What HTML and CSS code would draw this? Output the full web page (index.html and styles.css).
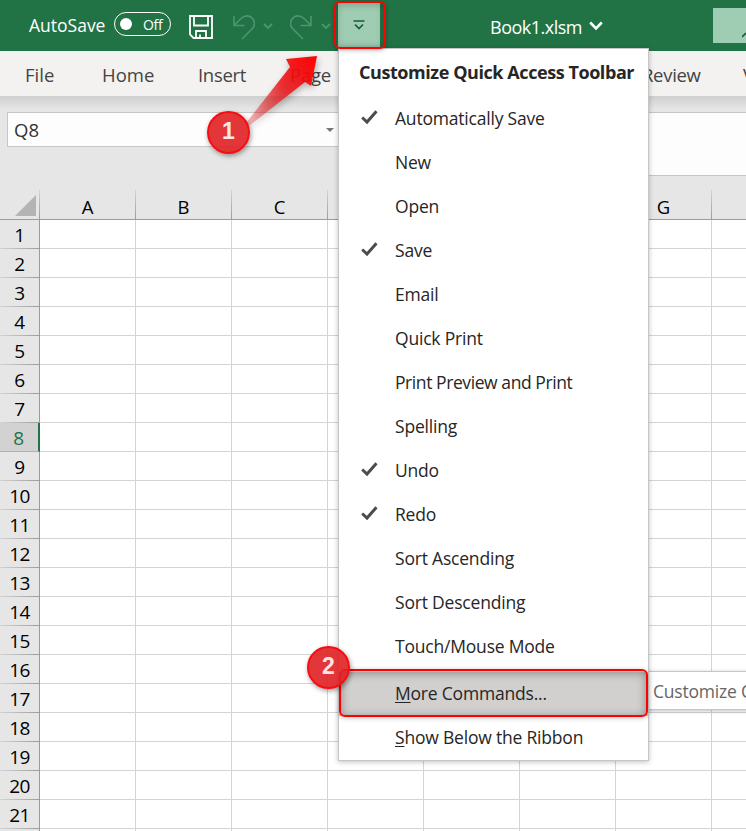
FILE: index.html
```html
<!doctype html>
<html lang="en">
  <head>
    <meta charset="UTF-8" />
    <meta name="viewport" content="width=device-width, initial-scale=1.0" />
    <title>Book1.xlsm</title>
    <link rel="stylesheet" href="styles.css">
  </head>
  <body>
    <header class="titlebar">
      <span class="autosave">AutoSave</span>
      <span class="toggle"><span class="knob"></span>Off</span>
      <svg class="save" width="24" height="24" viewBox="0 0 24 24" fill="none" stroke="#fff" stroke-width="1.8">
        <path d="M1 1H23V23H4.500L1 19.500Z" />
        <path d="M5 1V10.500H19V1M7 23V16H17V23M11 19.500V23" />
      </svg>
      <svg class="undo" width="22" height="25" viewBox="0 0 22 25" fill="none" stroke="#4e9470" stroke-width="1.6">
        <path d="M1 1V10.500H11.500M1.500 10L8 3.500C12 0 17 0 19.800 3.700C22.500 7.500 21.500 11.500 19 14L9 24" />
      </svg>
      <svg class="undo-arrow" width="10" height="6" viewBox="0 0 10 6" fill="none" stroke="#4e9470" stroke-width="1.8">
        <path d="M1 1L5 5L9 1" />
      </svg>
      <svg class="redo" width="22" height="25" viewBox="0 0 22 25" fill="none" stroke="#4e9470" stroke-width="1.6">
        <path d="M21 1V10.500H10.500M20.500 10L14 3.500C10 0 5 0 2.200 3.700C-.5 7.500 .5 11.500 3 14L13 24" />
      </svg>
      <svg class="redo-arrow" width="10" height="6" viewBox="0 0 10 6" fill="none" stroke="#4e9470" stroke-width="1.8">
        <path d="M1 1L5 5L9 1" />
      </svg>
      <span class="customize">
        <svg width="12" height="10" viewBox="0 0 12 10" fill="none" stroke="#185c37" stroke-width="1.700">
          <path d="M.5 1H11.500M2 4.500L6 8.500L10 4.500" />
        </svg>
      </span>
      <span class="filename">Book1.xlsm</span>
      <svg class="file-arrow" width="14" height="10" viewBox="0 0 14 10" fill="none" stroke="#fff" stroke-width="2.600">
        <path d="M1.200 1.500L7 7.300L12.800 1.500" />
      </svg>
      <span class="account">
        <svg width="4" height="6" viewBox="0 0 4 6"><path d="M0 5L4 1" stroke="#185c37" stroke-width="1.600" /></svg>
      </span>
    </header>

    <nav class="tabs">
      <a class="tab">File</a>
      <a class="tab tab-home">Home</a>
      <a class="tab tab-insert">Insert</a>
      <a class="tab tab-page">Page</a>
      <a class="tab tab-review">Review</a>
      <a class="tab tab-view">View</a>
    </nav>

    <section class="formula-bar">
      <div class="name-box">Q8<span class="name-arrow"></span></div>
      <div class="formula"></div>
    </section>

    <main class="sheet">
      <div class="columns">
        <div class="corner"><span class="triangle"></span></div>
        <div class="column">A</div>
        <div class="column">B</div>
        <div class="column">C</div>
        <div class="column">D</div>
        <div class="column">E</div>
        <div class="column">F</div>
        <div class="column">G</div>
      </div>
      <div class="grid">
        <div class="rows">
          <div class="row">1</div>
          <div class="row">2</div>
          <div class="row">3</div>
          <div class="row">4</div>
          <div class="row">5</div>
          <div class="row">6</div>
          <div class="row">7</div>
          <div class="row active">8</div>
          <div class="row">9</div>
          <div class="row">10</div>
          <div class="row">11</div>
          <div class="row">12</div>
          <div class="row">13</div>
          <div class="row">14</div>
          <div class="row">15</div>
          <div class="row">16</div>
          <div class="row">17</div>
          <div class="row">18</div>
          <div class="row">19</div>
          <div class="row">20</div>
          <div class="row">21</div>
        </div>
        <div class="cells"></div>
      </div>
    </main>

    <div class="tooltip">Customize Quick Access Toolbar</div>

    <div class="menu">
      <div class="menu-title">Customize Quick Access Toolbar</div>
      <div class="item checked">Automatically Save</div>
      <div class="item">New</div>
      <div class="item">Open</div>
      <div class="item checked">Save</div>
      <div class="item">Email</div>
      <div class="item">Quick Print</div>
      <div class="item item-long">Print Preview and Print</div>
      <div class="item">Spelling</div>
      <div class="item checked">Undo</div>
      <div class="item checked">Redo</div>
      <div class="item">Sort Ascending</div>
      <div class="item">Sort Descending</div>
      <div class="item">Touch/Mouse Mode</div>
      <div class="separator"></div>
      <div class="item hover"><span><u>M</u>ore Commands...</span></div>
      <div class="item"><span><u>S</u>how Below the Ribbon</span></div>
    </div>

    <div class="outline outline-button"></div>
    <div class="outline outline-item"></div>

    <svg class="arrow" width="90" height="90" viewBox="0 0 90 90">
      <defs>
        <linearGradient id="fade" x1="8" y1="76" x2="76" y2="6" gradientUnits="userSpaceOnUse">
          <stop offset="0" stop-color="#e81c20" stop-opacity=".25" />
          <stop offset=".55" stop-color="#ee1216" stop-opacity=".85" />
          <stop offset="1" stop-color="#ff0000" />
        </linearGradient>
      </defs>
      <path d="M6 73L50 17L46 9L77 6L71 36L65 32L9 76Z" fill="url(#fade)" />
    </svg>
    <div class="badge badge-one">1</div>
    <div class="badge badge-two">2</div>

    <script>
      const tick = `<svg class="tick" width="17" height="15" viewBox="0 0 17 15" fill="none" stroke="#4c4c4c" stroke-width="3">
        <path d="M1.200 7.500L6 12L15.500 1.200" />
      </svg>`;
      document.querySelectorAll(".checked").forEach((item) => {
        item.insertAdjacentHTML("afterbegin", tick);
      });
    </script>
  </body>
</html>
```
FILE: styles.css
```css
* {
  box-sizing: border-box;
}

body {
  margin: 0;
  width: 746px;
  height: 831px;
  overflow: hidden;
  position: relative;
  background-color: #e6e6e6;
  font-family: "Open Sans", "Noto Sans", sans-serif;
  font-size: 18px;
}

.titlebar {
  display: flex;
  align-items: center;
  height: 51px;
  background-color: #217346;
  color: #fff;
  white-space: nowrap;
  overflow: hidden;
}

.titlebar > * {
  flex-shrink: 0;
}

.autosave {
  width: 85px;
  margin-left: 29px;
  margin-top: -2px;
  font-size: 17.5px;
}

.toggle {
  display: flex;
  align-items: center;
  width: 57px;
  height: 24px;
  margin-top: -3px;
  padding-left: 5px;
  border: 1.5px solid #fff;
  border-radius: 12px;
  font-size: 14px;
  letter-spacing: -0.3px;
}

.knob {
  width: 12px;
  height: 12px;
  margin-right: 11px;
  border-radius: 50%;
  background-color: #fff;
}

.save {
  margin: 3px 0 0 18px;
}

.undo {
  margin: 3px 0 0 20px;
}

.undo-arrow {
  margin-left: 8px;
}

.redo {
  margin: 3px 0 0 17px;
}

.redo-arrow {
  margin-left: 9px;
}

.customize {
  display: flex;
  align-items: center;
  justify-content: center;
  width: 42px;
  height: 44px;
  margin-left: 7px;
  margin-bottom: 1px;
  background-color: #9fcdb3;
}

.filename {
  width: 90px;
  margin-left: 110px;
  margin-top: 2px;
  font-size: 18px;
  letter-spacing: -0.65px;
}

.filename {
  letter-spacing: -0.5px;
}

.file-arrow {
  margin-left: 9px;
  margin-top: 1px;
}

.account {
  display: flex;
  align-items: flex-end;
  justify-content: flex-end;
  width: 33px;
  height: 35px;
  margin-left: 110px;
  padding-bottom: 5px;
  background-color: #9fcdb3;
}

.tabs {
  display: flex;
  height: 45px;
  padding-left: 25px;
  background-color: #f3f2f1;
  color: #444;
  font-size: 18.5px;
  line-height: 48px;
  overflow: hidden;
}

.tab {
  width: 77px;
  flex-shrink: 0;
}

.tab-home {
  width: 96px;
}

.tab-insert {
  width: 92px;
  letter-spacing: -0.3px;
}

.tab-page {
  width: 352px;
  letter-spacing: -0.2px;
}

.tab-review {
  width: 101px;
  letter-spacing: -0.3px;
}

.formula-bar {
  display: flex;
  align-items: flex-start;
  height: 94px;
  padding: 16px 0 0 7px;
  background: linear-gradient(#cfcfcf, #e6e6e6 13px);
}

.name-box {
  display: flex;
  align-items: center;
  justify-content: space-between;
  width: 336px;
  height: 35px;
  padding: 0 8px 0 6px;
  border: 1px solid #c6c6c6;
  background-color: #fdfdfd;
  color: #333;
  font-size: 18.5px;
}

.name-arrow {
  border: 4px solid transparent;
  border-top-color: #777;
  border-bottom: 0;
}

.formula {
  width: 403px;
  height: 64px;
  border: solid #c6c6c6;
  border-width: 1px 0;
  background-color: #fdfdfd;
}

.columns {
  display: flex;
  height: 30px;
  border-bottom: 1px solid #9b9b9b;
  overflow: hidden;
}

.corner,
.column {
  flex-shrink: 0;
  border-right: 1px solid;
  border-image: linear-gradient(#d5d5d5, #9b9b9b) 1;
}

.corner {
  display: flex;
  justify-content: flex-end;
  align-items: flex-end;
  width: 40px;
  padding: 0 3px 3px 0;
}

.triangle {
  width: 21px;
  height: 21px;
  background-color: #b4b4b4;
  clip-path: polygon(100% 0, 100% 100%, 0 100%);
}

.column {
  width: 96px;
  font-size: 18.5px;
  line-height: 34px;
  text-align: center;
  color: #000;
}

.grid {
  display: flex;
}

.rows {
  width: 40px;
  border-right: 1px solid #9b9b9b;
}

.row {
  height: 29px;
  border-bottom: 1px solid;
  border-image: linear-gradient(to right, #d5d5d5, #9b9b9b) 1;
  font-size: 19px;
  letter-spacing: -0.5px;
  line-height: 31px;
  text-align: center;
  color: #000;
}

.active {
  width: 40px;
  padding-right: 1px;
  border-right: 2px solid #217346;
  border-bottom: 1px solid #b0b0b0;
  border-image: none;
  background-color: #d2d2d2;
  color: #217346;
}

.cells {
  flex: 1;
  height: 611px;
  background-color: #fff;
  background-image:
    linear-gradient(to right, transparent 95px, #d4d4d4 95px),
    linear-gradient(transparent 28px, #d4d4d4 28px);
  background-size: 96px 29px;
}

.menu {
  position: absolute;
  left: 338px;
  top: 48px;
  width: 311px;
  height: 713px;
  border: 1px solid #c6c6c6;
  background-color: #fff;
  box-shadow: 0 1px 5px rgba(0, 0, 0, 0.25);
  color: #262626;
}

.menu-title {
  height: 48px;
  padding-left: 20px;
  font-size: 18px;
  font-weight: bold;
  letter-spacing: -0.43px;
  line-height: 46px;
  white-space: nowrap;
}

.item {
  display: flex;
  align-items: center;
  height: 44px;
  padding-left: 56px;
  padding-bottom: 2px;
  font-size: 17.5px;
  letter-spacing: -0.2px;
  white-space: nowrap;
}

.item-long {
  letter-spacing: -0.42px;
}

.checked {
  padding-left: 22px;
}

.tick {
  margin-right: 17px;
  margin-top: -2px;
}

.separator {
  height: 3px;
}

.hover {
  background-color: #d2d0ce;
}

.item u {
  text-underline-offset: 2px;
  text-decoration-thickness: 1px;
}

.tooltip {
  position: absolute;
  left: 640px;
  top: 671px;
  width: 280px;
  height: 39px;
  padding-left: 12px;
  border: 1px solid #c6c6c6;
  background-color: #fff;
  box-shadow: 0 1px 4px rgba(0, 0, 0, 0.25);
  color: #666;
  font-size: 17.5px;
  letter-spacing: -0.2px;
  line-height: 38px;
  white-space: nowrap;
}

.outline {
  position: absolute;
  border: 2px solid #f00;
  border-radius: 6px;
}

.outline-button {
  left: 334px;
  top: 1px;
  width: 52px;
  height: 48px;
  box-shadow: 0 1px 5px rgba(0, 0, 0, 0.3), inset 0 1px 8px rgba(0, 0, 0, 0.25);
}

.outline-item {
  left: 339px;
  top: 669px;
  width: 309px;
  height: 48px;
  box-shadow: 0 1px 5px rgba(0, 0, 0, 0.25), inset 0 2px 10px rgba(0, 0, 0, 0.35);
}

.arrow {
  position: absolute;
  left: 240px;
  top: 50px;
  filter: drop-shadow(1px 3px 3px rgba(0, 0, 0, 0.3));
}

.badge {
  position: absolute;
  width: 43px;
  height: 43px;
  border: 2px solid #f80c0f;
  border-radius: 50%;
  background-color: rgba(224, 32, 36, 0.9);
  box-shadow: 1px 2px 5px rgba(0, 0, 0, 0.4);
  color: #ffe4e4;
  font-family: "Liberation Sans", sans-serif;
  font-size: 23px;
  font-weight: bold;
  line-height: 37px;
  text-align: center;
}

.badge-one {
  left: 207px;
  top: 111px;
}

.badge-two {
  left: 307px;
  top: 646px;
}
```
